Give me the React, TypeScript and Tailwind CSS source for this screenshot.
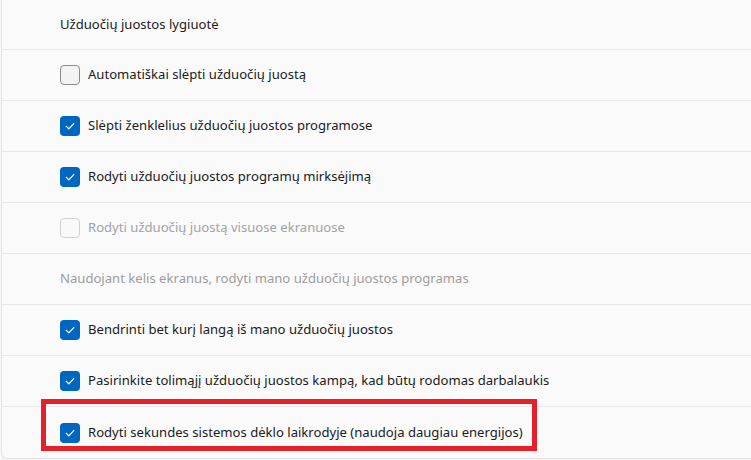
import React from "react";

type Row =
  | { kind: "header"; text: string; muted?: boolean }
  | { kind: "check"; text: string; checked: boolean; disabled?: boolean; highlight?: boolean };

const rows: Row[] = [
  { kind: "header", text: "Užduočių juostos lygiuotė" },
  { kind: "check", text: "Automatiškai slėpti užduočių juostą", checked: false },
  { kind: "check", text: "Slėpti ženklelius užduočių juostos programose", checked: true },
  { kind: "check", text: "Rodyti užduočių juostos programų mirksėjimą", checked: true },
  { kind: "check", text: "Rodyti užduočių juostą visuose ekranuose", checked: false, disabled: true },
  { kind: "header", text: "Naudojant kelis ekranus, rodyti mano užduočių juostos programas", muted: true },
  { kind: "check", text: "Bendrinti bet kurį langą iš mano užduočių juostos", checked: true },
  { kind: "check", text: "Pasirinkite tolimąjį užduočių juostos kampą, kad būtų rodomas darbalaukis", checked: true },
  {
    kind: "check",
    text: "Rodyti sekundes sistemos dėklo laikrodyje (naudoja daugiau energijos)",
    checked: true,
    highlight: true,
  },
];

function Box({ checked, disabled }: { checked: boolean; disabled?: boolean }) {
  if (checked) {
    return (
      <div className="w-5 h-5 rounded-[4px] bg-[#0067c0] flex items-center justify-center shrink-0">
        <svg width="12" height="12" viewBox="0 0 12 12" fill="none">
          <path d="M2.2 6.3 L4.8 8.8 L9.8 3.6" stroke="white" strokeWidth="1.2" strokeLinecap="round" strokeLinejoin="round" />
        </svg>
      </div>
    );
  }
  return (
    <div
      className={
        disabled
          ? "w-5 h-5 rounded-[4px] border border-[#d2d2d2] bg-[#f9f9f9] shrink-0"
          : "w-5 h-5 rounded-[4px] border border-[#8b8b8b] bg-[#f3f3f3] shrink-0"
      }
    />
  );
}

export default function App() {
  return (
    <div
      className="w-[751px] h-[460px] bg-[#f7f7f8] overflow-hidden"
      style={{ fontFamily: '"Noto Sans", "Open Sans", sans-serif' }}
    >
      <div className="ml-[1px] w-[760px] bg-[#fafafb] border-l border-b border-[#e3e3e5] rounded-bl-[6px]">
        {rows.map((r, i) => {
          const h = i === 0 ? "h-[50px]" : "h-[51px]";
          const last = i === rows.length - 1;
          return (
            <div
              key={i}
              className={`${h} flex items-center ${last ? "" : "border-b border-[#e8e8ea]"} pl-[58px] relative`}
            >
              {r.kind === "header" ? (
                <span className={`text-[13.1px] ${r.muted ? "text-[#9d9d9d]" : "text-[#1b1b1b]"}`}>{r.text}</span>
              ) : (
                <div className="flex items-center gap-2">
                  <Box checked={r.checked} disabled={r.disabled} />
                  <span className={`text-[13.1px] ${r.disabled ? "text-[#a3a3a3]" : "text-[#1b1b1b]"}`}>{r.text}</span>
                </div>
              )}
              {r.kind === "check" && r.highlight && (
                <div className="absolute left-[39px] top-[-8px] w-[496px] h-[52px] border-[5px] border-[#e5202a]" />
              )}
            </div>
          );
        })}
      </div>
    </div>
  );
}
